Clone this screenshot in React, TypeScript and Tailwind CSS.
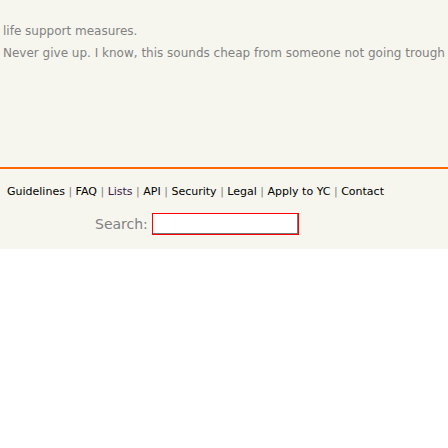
export default function App() {
  return (
    <div className="w-[448px] h-[448px] overflow-hidden bg-white" style={{ fontFamily: '"DejaVu Sans", Verdana, sans-serif' }}>
      <div className="bg-[#f6f6ef] h-[249px] flex flex-col">
        <div className="pl-[3px] pt-[24px] text-[12px] text-[#828282] whitespace-nowrap leading-[15px]">
          <p>life support measures.</p>
          <p className="mt-[7px]">Never give up. I know, this sounds cheap from someone not going trough</p>
        </div>
        <div className="mt-[106px] h-[2px] bg-[#ff6600]" />
        <div className="pl-[7px] pt-[16px] text-[11px] text-black whitespace-nowrap leading-[13px]">
          <span>Guidelines</span> <span className="text-[#828282]">|</span> <span>FAQ</span>{' '}
          <span className="text-[#828282]">|</span> <span className="text-[#3a1a4a]">Lists</span>{' '}
          <span className="text-[#828282]">|</span> <span>API</span> <span className="text-[#828282]">|</span>{' '}
          <span>Security</span> <span className="text-[#828282]">|</span> <span>Legal</span>{' '}
          <span className="text-[#828282]">|</span> <span>Apply to YC</span>{' '}
          <span className="text-[#828282]">|</span> <span>Contact</span>
        </div>
        <div className="flex items-center pl-[95px] mt-[15px]">
          <span className="text-[14px] text-[#828282] mr-[4px]">Search:</span>
          <div className="w-[147px] h-[22px] border border-[#ff0000] bg-white shadow-[inset_-1px_-1px_0_#767676]" />
        </div>
      </div>
    </div>
  )
}
